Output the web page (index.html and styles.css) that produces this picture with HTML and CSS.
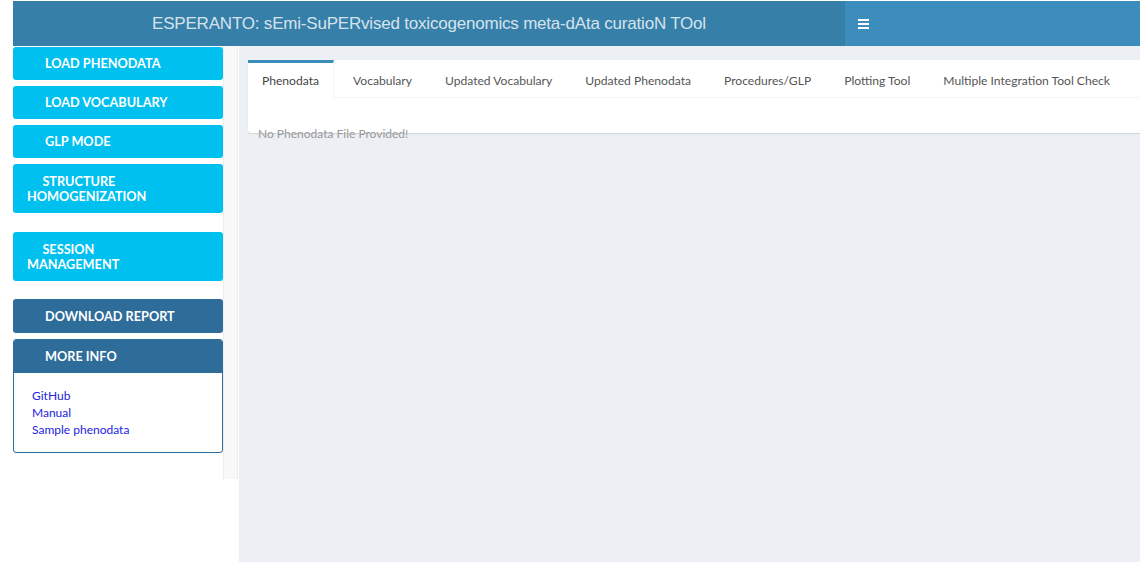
FILE: index.html
```html
<!DOCTYPE html>
<html>
<head>
<meta charset="utf-8">
<link rel="stylesheet" href="styles.css">
</head>
<body>
<div class="page">
  <header class="header">
    <div class="logo">ESPERANTO: sEmi-SuPERvised toxicogenomics meta-dAta curatioN TOol</div>
    <div class="navbar">
      <span class="toggle"><span></span><span></span><span></span></span>
    </div>
  </header>
  <div class="main">
    <aside class="side-col">
      <div class="sidebar">
        <div class="menu">
          <div class="btn info">LOAD PHENODATA</div>
          <div class="btn info">LOAD VOCABULARY</div>
          <div class="btn info">GLP MODE</div>
          <div class="btn info two">&nbsp;&nbsp;&nbsp;&nbsp;&nbsp;STRUCTURE<br>HOMOGENIZATION</div>
          <div class="btn info two gap-lg">&nbsp;&nbsp;&nbsp;&nbsp;&nbsp;SESSION<br>MANAGEMENT</div>
          <div class="btn dark gap-lg">DOWNLOAD REPORT</div>
          <div class="info-box">
            <div class="info-head">MORE INFO</div>
            <div class="info-body">
              <a href="#">GitHub</a>
              <a href="#">Manual</a>
              <a href="#">Sample phenodata</a>
            </div>
          </div>
        </div>
        <div class="track"></div>
      </div>
    </aside>
    <section class="content">
      <div class="tabbox">
        <ul class="tabs">
          <li class="active">Phenodata</li>
          <li>Vocabulary</li>
          <li>Updated Vocabulary</li>
          <li>Updated Phenodata</li>
          <li>Procedures/GLP</li>
          <li>Plotting Tool</li>
          <li>Multiple Integration Tool Check</li>
        </ul>
        <div class="tab-content">
          <p class="empty">No Phenodata File Provided!</p>
        </div>
      </div>
    </section>
  </div>
</div>
</body>
</html>
```

FILE: styles.css
```css
* { box-sizing: border-box; }
html, body { margin: 0; padding: 0; background: #fff; }
body { font-family: "Lato", "Liberation Sans", sans-serif; overflow: hidden; }
.page { width: 1140px; height: 562px; padding-top: 1px; display: flex; flex-direction: column; }

.header { display: flex; height: 45px; margin-left: 13px; flex: none; }
.logo {
  width: 832px; background: #367fa9; color: rgba(255,255,255,0.8);
  font-family: "Liberation Sans", sans-serif; font-size: 17px; letter-spacing: -0.2px;
  display: flex; align-items: center; justify-content: center; padding-top: 1px;
}
.navbar { flex: 1; background: #3c8dbc; display: flex; align-items: center; padding-left: 13px; }
.toggle { display: flex; flex-direction: column; gap: 2px; width: 11px; }
.toggle span { display: block; height: 2px; background: #fff; }

.main { flex: 1; display: flex; min-height: 0; }
.side-col { width: 239px; flex: none; padding-left: 13px; background: #fff; }
.sidebar { display: flex; height: 433px; }
.menu { width: 210px; padding-top: 1px; display: flex; flex-direction: column; }
.track { width: 15px; background: #f8f8f8; border-left: 1px solid #ededed; border-right: 1px solid #ededed; }

.btn {
  color: #fff; font-weight: 700; font-size: 12.7px; line-height: 15px;
  border-radius: 3px; padding: 9px 10px 9px 32px; margin-bottom: 6px; height: 33px;
}
.btn.two { height: 49px; padding: 10px 10px 9px 14px; }
.btn.info { background: #00c0ef; }
.btn.dark { background: #2e6c99; padding-top: 10px; height: 34px; margin-bottom: 6px; margin-top: 12px; }
.gap-lg { margin-top: 13px; }

.info-box { border: 1px solid #2e6c99; border-radius: 3px; overflow: hidden; }
.info-head {
  background: #2e6c99; color: #fff; font-weight: 700; font-size: 12.7px; line-height: 15px;
  padding: 9px 10px 9px 31px; height: 33px;
}
.info-body { padding: 14px 18px 14px; display: flex; flex-direction: column; }
.info-body a { color: #2323e2; text-decoration: none; font-size: 12px; line-height: 17px; }

.content { flex: 1; background: #ecf0f5; padding: 14px 0 0 9px; overflow: hidden; }
.tabbox { width: 900px; background: #fff; border-radius: 3px; box-shadow: 0 1px 1px rgba(0,0,0,0.12); }
.tabs {
  list-style: none; margin: 0; padding: 0; display: flex; height: 38px;
  border-bottom: 1px solid #f4f4f4;
}
.tabs li {
  font-size: 12.1px; color: #555; padding: 3px 14px 0; margin-right: 5px;
  border-top: 3px solid transparent; line-height: 30px; white-space: nowrap;
}
.tabs li.active {
  border-top-color: #3c8dbc; border-right: 1px solid #f4f4f4; color: #444;
  background: #fff; height: 38px; margin-bottom: -1px;
}
.tab-content { height: 35px; padding: 29px 10px 0; }
.empty { margin: 0; font-size: 12px; line-height: 14px; color: #999; }
```
